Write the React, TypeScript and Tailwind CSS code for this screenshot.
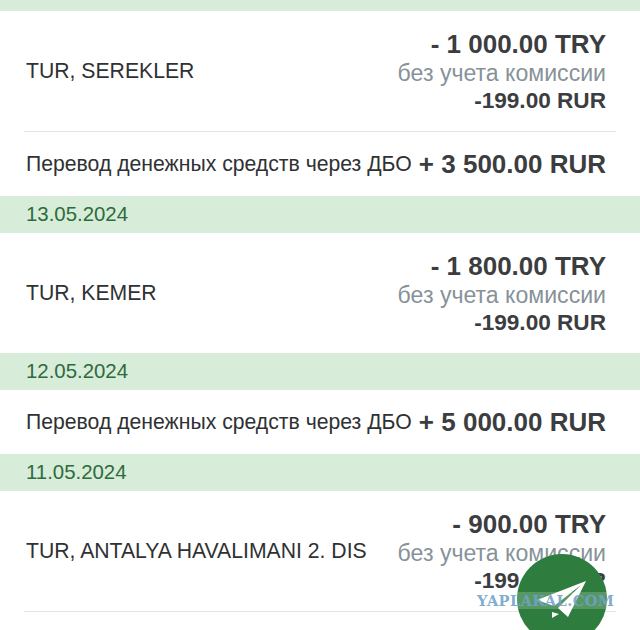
import React from "react";

const DateBar = ({ date }: { date?: string }) => (
  <div className="h-[37px] bg-[#d7ecd9] pl-[26px] pb-[1px] flex items-center text-[20.4px] text-[#2e6b3c]">
    {date}
  </div>
);

const Card = ({ name, amount }: { name: string; amount: string }) => (
  <div className="h-[120px] pl-[26px] pr-[34px] flex items-center justify-between">
    <div className="text-[21.2px] text-[#2f3133] whitespace-nowrap mt-[-1px]">{name}</div>
    <div className="text-right">
      <div className="text-[26px] leading-[30px] font-bold text-[#3b3d40]">{amount}</div>
      <div className="text-[23.1px] leading-[28px] text-[#86929a]">без учета комиссии</div>
      <div className="text-[22.6px] leading-[27px] font-bold text-[#3b3d40]">-199.00 RUR</div>
    </div>
  </div>
);

const Transfer = ({ amount }: { amount: string }) => (
  <div className="h-[64px] pl-[26px] pr-[34px] flex items-center justify-between">
    <div className="text-[21.2px] text-[#2f3133] whitespace-nowrap">Перевод денежных средств через ДБО</div>
    <div className="text-[26px] font-bold text-[#3b3d40] whitespace-nowrap">{amount}</div>
  </div>
);

const Divider = () => <div className="h-px ml-[24px] mr-[24px] bg-[#e4e6e6]" />;

export default function App() {
  return (
    <div className="relative w-[640px] h-[630px] overflow-hidden bg-white font-['Liberation_Sans',sans-serif]">
      <div className="h-[11px] bg-[#d7ecd9]" />
      <Card name="TUR, SEREKLER" amount="- 1 000.00 TRY" />
      <Divider />
      <Transfer amount="+ 3 500.00 RUR" />
      <DateBar date="13.05.2024" />
      <Card name="TUR, KEMER" amount="- 1 800.00 TRY" />
      <DateBar date="12.05.2024" />
      <Transfer amount="+ 5 000.00 RUR" />
      <DateBar date="11.05.2024" />
      <Card name="TUR, ANTALYA HAVALIMANI 2. DIS" amount="- 900.00 TRY" />
      <Divider />

      {/* floating button */}
      <div className="absolute left-[517px] top-[554px] w-[90px] h-[90px] rounded-full bg-[#2e7d3e]">
        <svg width="90" height="90" viewBox="0 0 90 90">
          <path d="M69 27 L20 46 L37 52 L64 31 L41 54 L51 63 Z" fill="#ffffff" />
          <path d="M35 58 L42 60 L35 64 Z" fill="#ffffff" />
        </svg>
      </div>

      {/* watermark */}
      <div className="absolute left-[477px] top-[592px] text-[14.6px] leading-[17px] font-bold tracking-[0.4px] text-[#6fa3c8]/90 bg-white/20 font-['DejaVu_Serif',serif]">
        YAPLAKAL.COM
      </div>
    </div>
  );
}
